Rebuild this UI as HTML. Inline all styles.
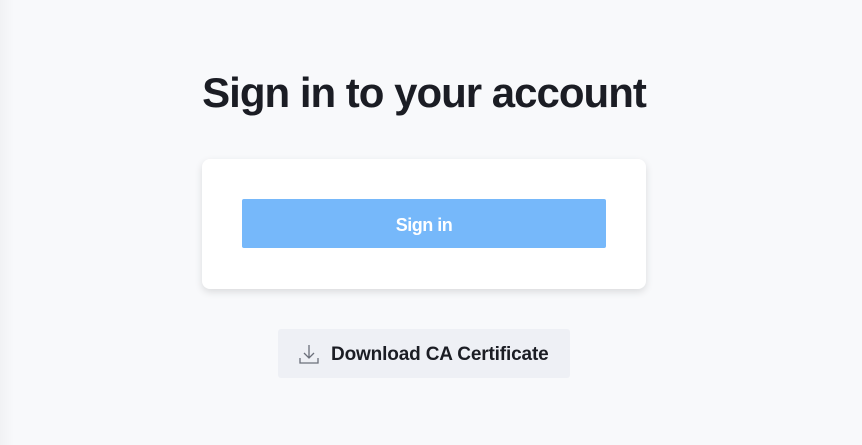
<!DOCTYPE html>
<html><head><style>
body{margin:0;width:862px;height:445px;background:#f8f9fb;font-family:"Liberation Sans",sans-serif;position:relative;overflow:hidden}
.edge{position:absolute;left:0;top:0;width:14px;height:445px;background:linear-gradient(90deg,#f1f2f4,#f8f9fb)}
h1{position:absolute;left:182px;top:69px;width:484px;margin:0;text-align:center;font-size:42px;font-weight:bold;color:#1b1d24;letter-spacing:-1px;white-space:nowrap}
.card{position:absolute;left:202px;top:159px;width:444px;height:130px;background:#fff;border-radius:8px;box-shadow:0 3px 8px rgba(0,0,0,.12)}
.btn{position:absolute;left:40px;top:40px;width:364px;height:49px;background:#76b8fa;border-radius:2px;color:#fff;font-weight:bold;font-size:18px;text-align:center;line-height:52px;letter-spacing:-0.5px}
.dl{position:absolute;left:278px;top:329px;width:292px;height:49px;background:#eef0f5;border-radius:3px;color:#1b1d24;font-weight:bold;font-size:19px;line-height:51px;letter-spacing:-0.15px}
.dl svg{position:absolute;left:20px;top:14px}
.dl span{position:absolute;left:53px}
</style></head><body>
<div class="edge"></div>
<h1>Sign in to your account</h1>
<div class="card"><div class="btn">Sign in</div></div>
<div class="dl"><svg width="22" height="22" viewBox="0 0 22 22" fill="none" stroke="#6b6f7a" stroke-width="1.3"><path d="M11 2v13M6 10l5 5 5-5M2 15v5h18v-5"/></svg><span>Download CA Certificate</span></div>
</body></html>
